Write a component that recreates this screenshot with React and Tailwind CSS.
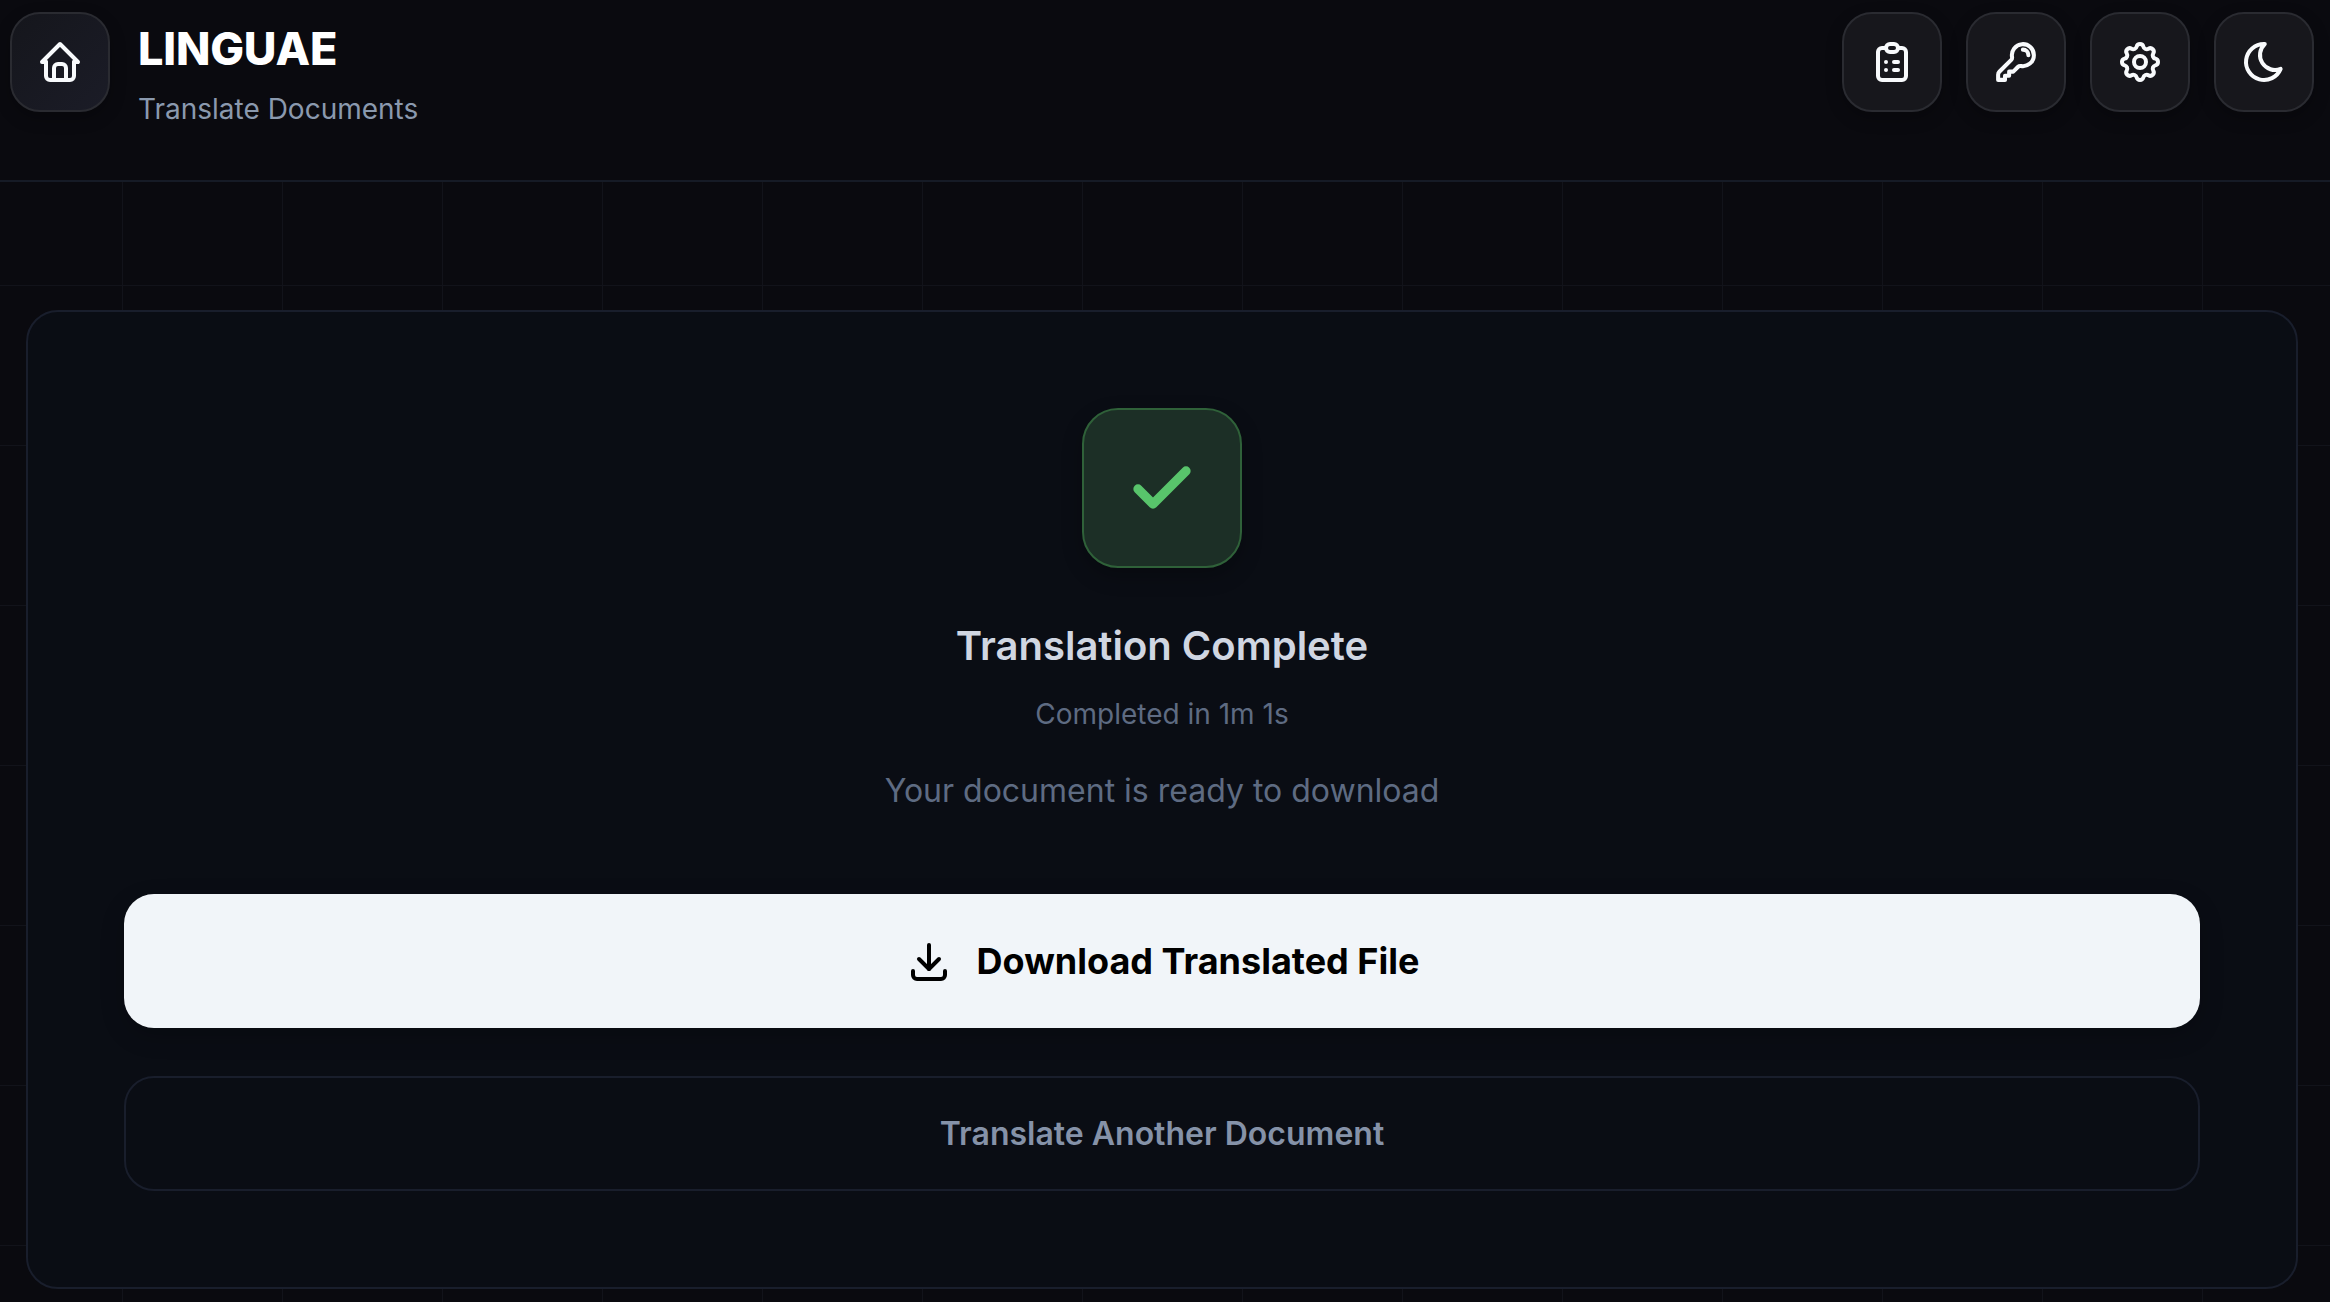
import React from "react";
import { TbHome, TbClipboardList, TbSettings, TbMoon, TbDownload } from "react-icons/tb";
import { Check } from "lucide-react";

const inter = "font-['Inter',sans-serif]";

function KeyIcon() {
  return (
    <svg width="44" height="44" viewBox="0 0 24 24" fill="none" stroke="currentColor" strokeWidth="2.2" strokeLinecap="round" strokeLinejoin="round">
      <path d="M15.75 5.25a3 3 0 0 1 3 3m3 0a6 6 0 0 1-7.029 5.912c-.563-.097-1.159.026-1.563.43L10.5 17.25H8.25v2.25H6v2.25H2.25v-2.818c0-.597.237-1.17.659-1.591l6.499-6.499c.404-.404.527-1 .43-1.563A6 6 0 1 1 21.75 8.25Z" />
    </svg>
  );
}

function IconButton({ children }) {
  return (
    <button className="flex h-[100px] w-[100px] shrink-0 items-center justify-center rounded-[30px] border-2 border-[#2a2b31] bg-[#17171c] text-[#f8fafc] shadow-[0_6px_16px_rgba(0,0,0,0.25)]">
      {children}
    </button>
  );
}

export default function App() {
  return (
    <div className={`${inter} h-[1302px] w-full overflow-hidden bg-[#0a0a0f] bg-[linear-gradient(to_right,#12131a_1.5px,transparent_1.5px),linear-gradient(to_bottom,#12131a_1.5px,transparent_1.5px)] bg-[size:160px_160px] bg-[position:122px_125px]`}>
      <header className="flex h-[182px] items-start justify-between border-b-2 border-[#161b26] bg-[#0a0a0f] pl-[10px] pr-[16px] pt-[12px]">
        <div className="flex items-start gap-[28px]">
          <button className="flex h-[100px] w-[100px] shrink-0 items-center justify-center rounded-[30px] border-2 border-[#2a2b31] bg-[linear-gradient(135deg,#15161c,#1b1c27)] text-[#f8fafc] shadow-[0_6px_16px_rgba(0,0,0,0.25)]">
            <TbHome size={48} />
          </button>
          <div className="pt-[12px]">
            <h1 className="text-[45px] font-extrabold leading-[50px] tracking-[-0.2px] text-white">LINGUAE</h1>
            <p className="mt-[17px] text-[28px] leading-[36px] text-[#8a99ae]">Translate Documents</p>
          </div>
        </div>
        <div className="flex gap-[24px]">
          <IconButton><TbClipboardList size={48} /></IconButton>
          <IconButton><KeyIcon /></IconButton>
          <IconButton><TbSettings size={48} /></IconButton>
          <IconButton><TbMoon size={48} /></IconButton>
        </div>
      </header>
      <main className="ml-[26px] mr-[32px] mt-[128px]">
        <section className="flex h-[979px] flex-col items-center rounded-[32px] border-2 border-[#191e2c] bg-[#0a0d14] px-[96px] pt-[96px]">
          <div className="flex h-[160px] w-[160px] items-center justify-center rounded-[36px] border-2 border-[#2f6139] bg-[#1c2f26] text-[#58c46b] shadow-[0_8px_20px_rgba(0,0,0,0.25)]">
            <Check size={72} strokeWidth={3.1} className="translate-y-[1px]" />
          </div>
          <h2 className="mt-[50px] text-[40px] font-semibold leading-[56px] text-[#d0d6e2]">Translation Complete</h2>
          <p className="mt-[19px] text-[28px] leading-[42px] text-[#5e6b82]">Completed in 1m 1s</p>
          <p className="mt-[32px] text-[32px] leading-[48px] text-[#5e6b82]">Your document is ready to download</p>
          <button className="mt-[79px] flex h-[134px] w-full items-center justify-center gap-[24px] rounded-[30px] bg-[#f1f5f9] text-[36px] font-bold text-black shadow-[0_8px_24px_rgba(0,0,0,0.2)]">
            <TbDownload size={48} />
            Download Translated File
          </button>
          <button className="mt-[48px] flex h-[115px] w-full items-center justify-center rounded-[30px] border-2 border-[#191e2c] text-[32px] font-semibold text-[#8592a8]">
            Translate Another Document
          </button>
        </section>
      </main>
    </div>
  );
}
